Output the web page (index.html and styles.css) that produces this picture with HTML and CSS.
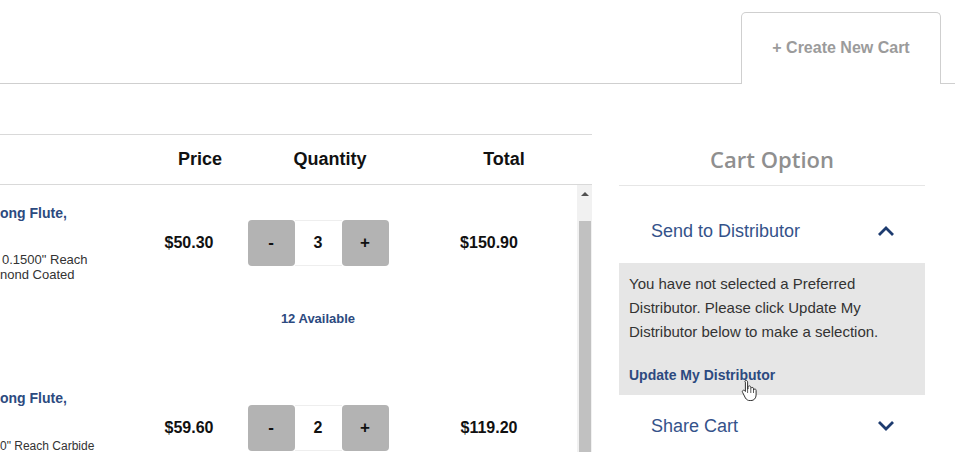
FILE: index.html
```html
<!DOCTYPE html>
<html>
<head>
<meta charset="utf-8">
<link rel="stylesheet" href="styles.css">
</head>
<body>
<div class="topbar">
  <div class="tab">+ Create New Cart</div>
</div>
<div class="main">
  <div class="cart">
    <div class="thead">
      <div class="th th-prod"></div>
      <div class="th th-price">Price</div>
      <div class="th th-qty">Quantity</div>
      <div class="th th-total">Total</div>
    </div>
    <div class="tbody">
      <div class="rows">
        <div class="row">
          <div class="prod">
            <div class="pname">ong Flute,</div>
            <div class="pdesc">
              <div class="dl dl-a">0.1500" Reach</div>
              <div class="dl">nond Coated</div>
            </div>
          </div>
          <div class="price">$50.30</div>
          <div class="qtycell">
            <div class="qty">
              <span class="qbtn">-</span>
              <span class="qval">3</span>
              <span class="qbtn">+</span>
            </div>
            <div class="avail">12 Available</div>
          </div>
          <div class="total">$150.90</div>
        </div>
        <div class="row">
          <div class="prod">
            <div class="pname">ong Flute,</div>
            <div class="pdesc pdesc2">
              <div class="dl">0" Reach Carbide</div>
            </div>
          </div>
          <div class="price">$59.60</div>
          <div class="qtycell">
            <div class="qty">
              <span class="qbtn">-</span>
              <span class="qval">2</span>
              <span class="qbtn">+</span>
            </div>
          </div>
          <div class="total">$119.20</div>
        </div>
      </div>
      <div class="scrollbar">
        <div class="sb-arrow"></div>
        <div class="sb-thumb"></div>
      </div>
    </div>
  </div>
  <div class="options">
    <div class="opt-title">Cart Option</div>
    <div class="opt-list">
      <div class="opt-head">
        <span>Send to Distributor</span>
        <svg class="chev" width="18" height="12" viewBox="0 0 18 12"><path d="M2 10 L9 3 L16 10" fill="none" stroke="#1d3b6f" stroke-width="2.8"/></svg>
      </div>
      <div class="opt-body">
        <p>You have not selected a Preferred Distributor. Please click Update My Distributor below to make a selection.</p>
        <div class="upd">Update My Distributor</div>
        <svg class="cursor" width="18" height="22" viewBox="0 0 18 22"><path d="M5 1.5c1 0 1.6.6 1.6 1.6v7l.4-.1V8.4c0-1 .6-1.5 1.4-1.5s1.4.5 1.4 1.5v1.2c.2-.9.8-1.2 1.4-1.2.8 0 1.3.5 1.3 1.4v1.2c.3-.7.8-1 1.3-1 .8 0 1.3.6 1.3 1.5v4.5c0 3-2 5.6-5.2 5.6H9c-2.2 0-3.5-1-4.6-2.6L1.6 13.4c-.5-.8-.3-1.6.4-2 .7-.4 1.5-.2 2 .5l.4.6V3.1C3.4 2.1 4 1.5 5 1.5z" fill="#fff" stroke="#333" stroke-width="1"/><path d="M6.6 10v4M9.8 10v4M12.5 11v3" stroke="#333" stroke-width="0.8"/></svg>
      </div>
      <div class="opt-head">
        <span>Share Cart</span>
        <svg class="chev" width="18" height="12" viewBox="0 0 18 12"><path d="M2 2 L9 9 L16 2" fill="none" stroke="#1d3b6f" stroke-width="2.8"/></svg>
      </div>
    </div>
  </div>
</div>
</body>
</html>
```
FILE: styles.css
```css
* { box-sizing: border-box; }
html, body { margin: 0; padding: 0; }
body {
  font-family: "Liberation Sans", Arial, sans-serif;
  color: #222;
  background: #fff;
  width: 961px;
  height: 452px;
  overflow: hidden;
}
.topbar {
  width: 955px;
  height: 84px;
  border-bottom: 1px solid #cfcfcf;
  display: flex;
  justify-content: flex-end;
  align-items: flex-end;
}
.tab {
  width: 200px;
  height: 72px;
  margin-right: 14px;
  margin-bottom: -1px;
  border: 1px solid #cfcfcf;
  border-bottom: none;
  border-radius: 5px 5px 0 0;
  background: #fff;
  display: flex;
  align-items: center;
  justify-content: center;
  padding-bottom: 1px;
  font-size: 16px;
  font-weight: bold;
  color: #9b9b9b;
}
.main {
  display: flex;
  margin-top: 50px;
}
.cart { width: 592px; }
.thead {
  display: flex;
  height: 51px;
  border-top: 1px solid #d9d9d9;
  border-bottom: 1px solid #d9d9d9;
  align-items: center;
  font-size: 18px;
  font-weight: bold;
  color: #111;
}
.th { text-align: center; }
.th-prod { width: 156px; }
.th-price { width: 88px; }
.th-qty { width: 172px; }
.th-total { width: 176px; }
.tbody { display: flex; height: 267px; overflow: hidden; }
.rows { width: 577px; overflow: hidden; }
.row {
  display: grid;
  grid-template-columns: 150px 78px 180px 162px;
  height: 185px;
}
.prod { padding-top: 20px; }
.pname {
  font-size: 14px;
  font-weight: bold;
  color: #2c4a80;
  line-height: 16px;
}
.pdesc {
  margin-top: 31px;
  font-size: 13px;
  line-height: 15px;
  color: #333;
  white-space: nowrap;
}
.dl-a { margin-left: 2px; }
.pdesc2 { margin-top: 33px; font-size: 12px; }
.price, .total {
  margin-top: 35px;
  height: 46px;
  display: flex;
  align-items: center;
  justify-content: center;
  font-size: 16px;
  font-weight: bold;
  color: #111;
}
.qtycell {
  padding-top: 35px;
  display: flex;
  flex-direction: column;
  align-items: center;
}
.qty { display: flex; height: 46px; }
.qbtn {
  width: 47px;
  background: #b3b3b3;
  border-radius: 4px;
  display: flex;
  align-items: center;
  justify-content: center;
  font-size: 17px;
  font-weight: bold;
  color: #111;
}
.qval {
  width: 47px;
  border-top: 1px solid #eee;
  border-bottom: 1px solid #eee;
  display: flex;
  align-items: center;
  justify-content: center;
  font-size: 16px;
  font-weight: bold;
  color: #111;
}
.avail {
  margin-top: 45px;
  font-size: 13px;
  line-height: 16px;
  font-weight: bold;
  color: #2c4a80;
}
.scrollbar {
  width: 15px;
  background: #f1f1f1;
  display: flex;
  flex-direction: column;
  align-items: center;
}
.sb-arrow {
  margin-top: 7px;
  width: 0;
  height: 0;
  border-left: 4px solid transparent;
  border-right: 4px solid transparent;
  border-bottom: 4px solid #505050;
}
.sb-thumb {
  margin-top: 25px;
  width: 12px;
  flex: 1;
  background: #c1c1c1;
}
.options {
  width: 306px;
  margin-left: 27px;
}
.opt-title {
  height: 52px;
  border-bottom: 1px solid #e6e6e6;
  display: flex;
  align-items: center;
  justify-content: center;
  font-family: "Open Sans", sans-serif;
  font-size: 22px;
  font-weight: 600;
  color: #8f8f8f;
  padding-bottom: 2px;
}
.opt-list { margin-top: 15px; }
.opt-head {
  display: flex;
  align-items: center;
  justify-content: space-between;
  padding: 20px 30px 22px 32px;
  font-size: 18px;
  line-height: 20px;
  color: #34528a;
}
.opt-head + .opt-body + .opt-head { padding-top: 21px; }
.chev { display: block; }
.opt-body {
  position: relative;
  background: #e6e6e6;
  padding: 9px 36px 10px 10px;
  height: 132px;
}
.opt-body p {
  margin: 0;
  font-size: 15px;
  line-height: 24px;
  color: #333;
}
.upd {
  margin-top: 21px;
  font-size: 14px;
  line-height: 20px;
  font-weight: bold;
  color: #2c4a80;
  white-space: nowrap;
}
.cursor {
  position: absolute;
  left: 122px;
  top: 116px;
}
```
